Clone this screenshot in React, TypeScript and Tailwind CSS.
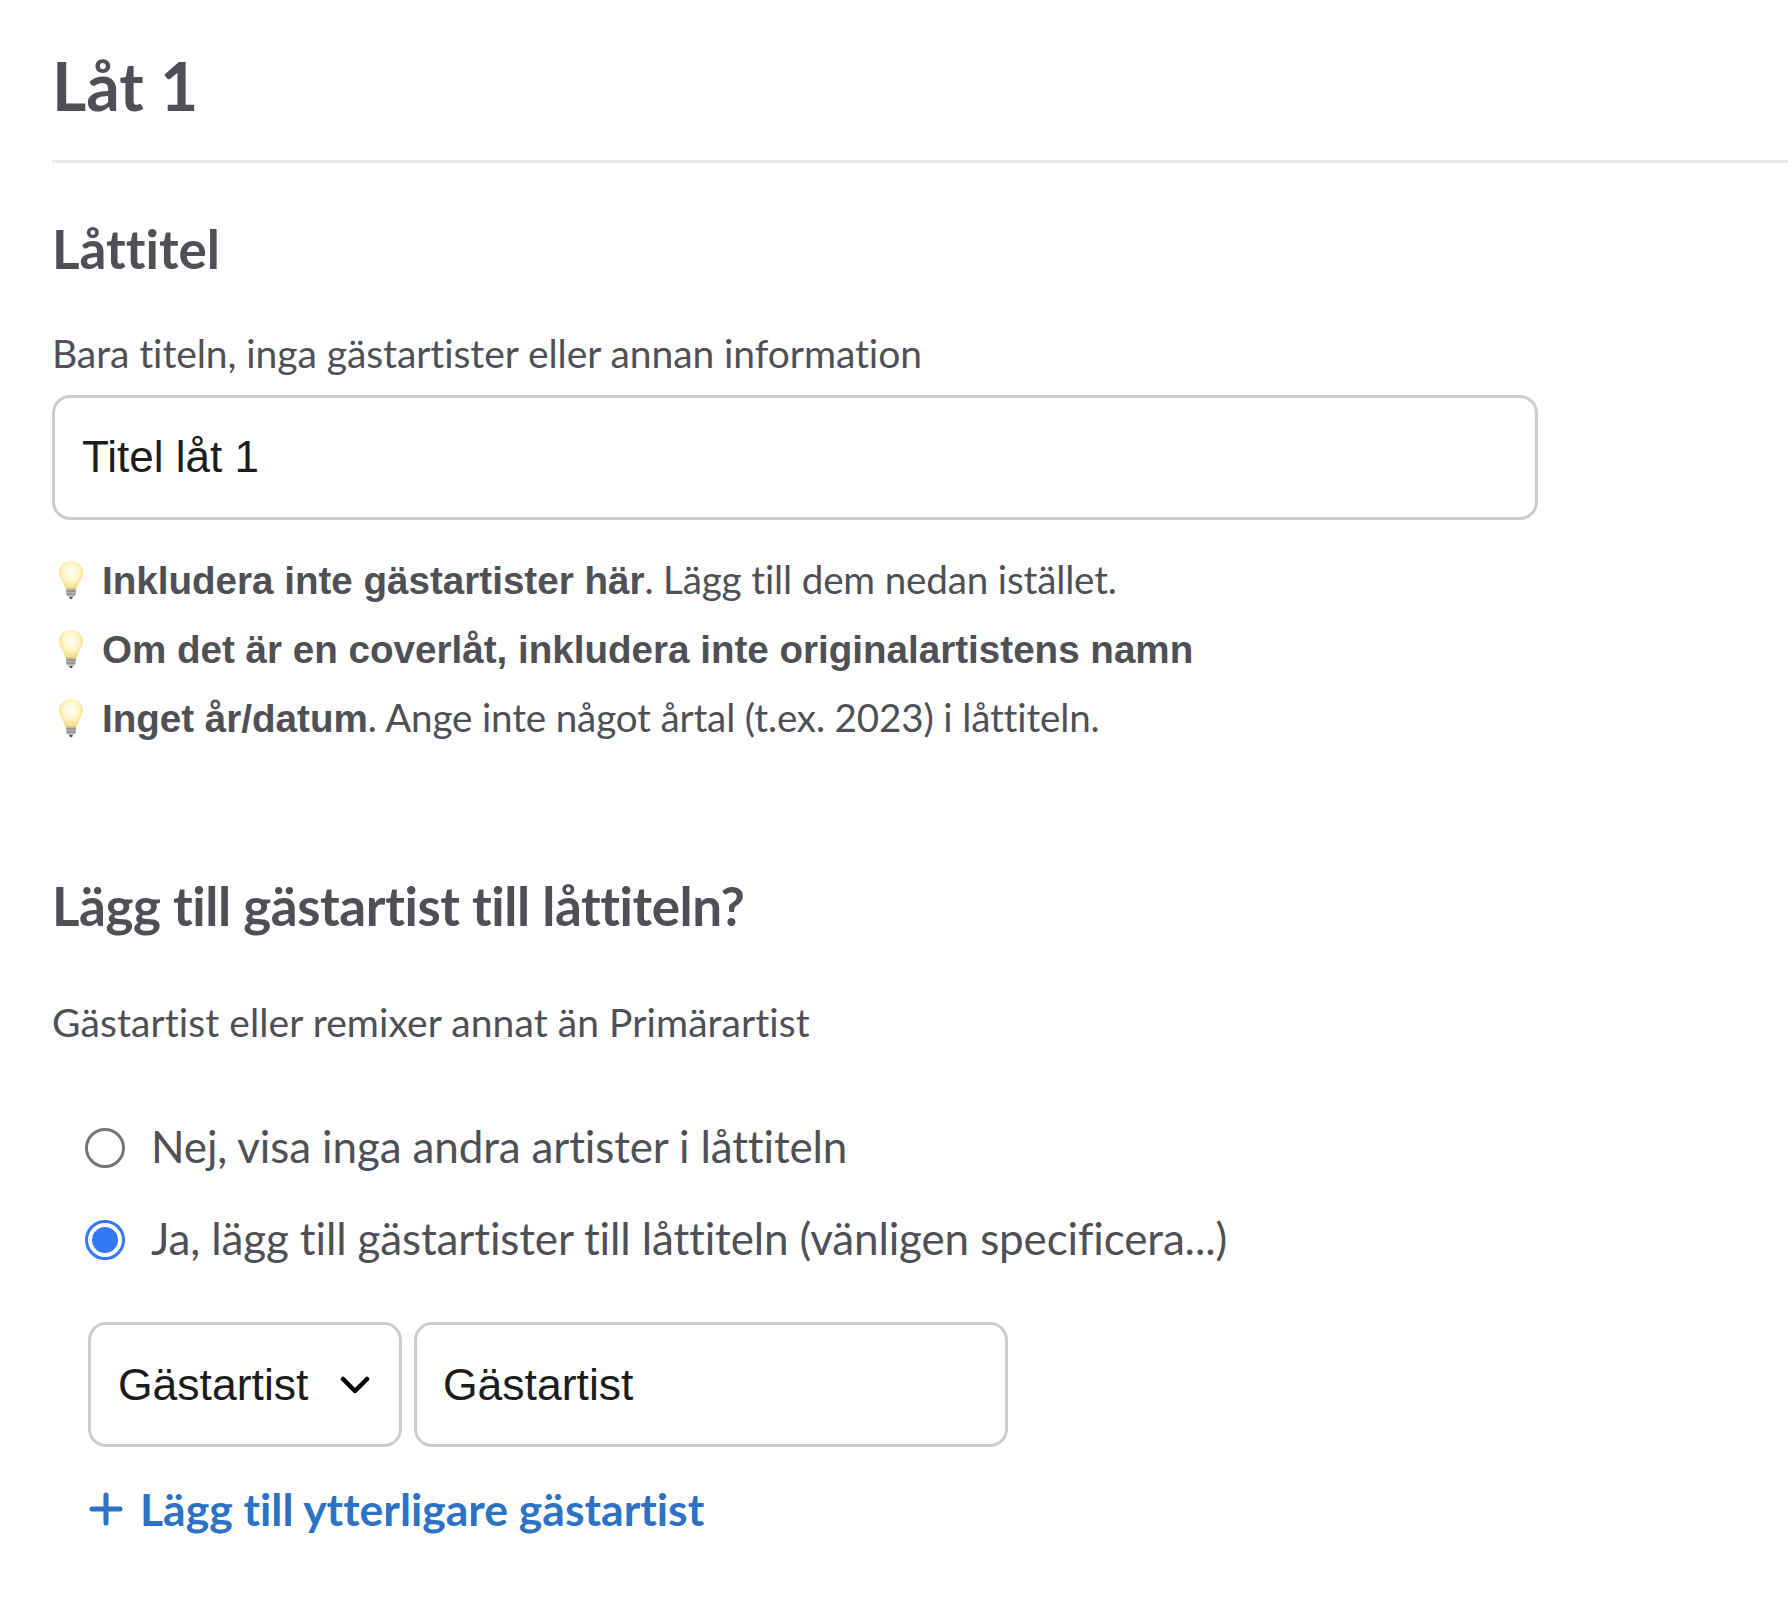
function Bulb() {
  return (
    <svg width="28" height="40" viewBox="0 0 28 40" className="shrink-0">
      <defs>
        <radialGradient id="glass" cx="50%" cy="40%" r="60%">
          <stop offset="0%" stopColor="#fffef6" />
          <stop offset="55%" stopColor="#fff6c9" />
          <stop offset="100%" stopColor="#fbd676" />
        </radialGradient>
      </defs>
      <path d="M14 1C6.5 1 2 6.4 2 12.2c0 6 4.4 9.6 6 15.3.3 1 .9 1.5 1.9 1.5h8.2c1 0 1.6-.5 1.9-1.5 1.6-5.7 6-9.3 6-15.3C26 6.400 21.500 1 14 1z" fill="url(#glass)" />
      <path d="M9 28.500h10v5.500c0 1.500-1.500 2.500-2.500 2.500L15.500 39h-3l-1-2.500C10.500 36.500 9 35.500 9 34z" fill="#b9b9b4" />
      <path d="M9.500 31h9M10 34h8" stroke="#77777a" strokeWidth="1" />
      <path d="M12.500 37h3l-.7 2h-1.600z" fill="#4d4e53" />
    </svg>
  );
}

function Tip({ bold, rest }: { bold: string; rest?: string }) {
  return (
    <div className="flex items-center h-[69px]">
      <div className="w-[50px] pl-[5px] flex">
        <Bulb />
      </div>
      <p className="text-[38.6px] leading-[48px] whitespace-nowrap">
        <b className="font-['Liberation_Sans',sans-serif] font-bold">{bold}</b>
        <span className="tracking-[-0.15px]">{rest}</span>
      </p>
    </div>
  );
}

function Radio({ checked, children }: { checked?: boolean; children: React.ReactNode }) {
  return (
    <label className="flex items-center gap-[26px] h-[48px]">
      {checked ? (
        <span className="mt-[4px] w-[40px] h-[40px] rounded-full border-[3px] border-[#3478f6] flex items-center justify-center shrink-0">
          <span className="w-[26px] h-[26px] rounded-full bg-[#3478f6]" />
        </span>
      ) : (
        <span className="mt-[4px] w-[40px] h-[40px] rounded-full border-[3px] border-[#767676] shrink-0" />
      )}
      <span className="text-[44px] leading-[48px] tracking-[-0.13px] whitespace-nowrap">{children}</span>
    </label>
  );
}

export default function App() {
  return (
    <div className="min-h-[1620px] bg-white pl-[52px] text-[#4f5056] font-['Lato',sans-serif] [font-variant-ligatures:none]">
      <h1 className="text-[66px] leading-[76px] font-bold pt-[48px] pb-[36px] border-b-[3px] border-[#e8e9ec]">
        Låt 1
      </h1>

      <h2 className="mt-[56px] text-[53px] leading-[60px] font-bold">Låttitel</h2>
      <p className="mt-[51px] text-[39px] leading-[46px] tracking-[-0.07px]">Bara titeln, inga gästartister eller annan information</p>
      <div className="mt-[19px] w-[1486px] h-[125px] rounded-[18px] border-[3px] border-[#cccccc] flex items-center pl-[27px] pb-[1px] text-[44px] text-[#1c1c1c] font-['Liberation_Sans',sans-serif]">
        Titel låt 1
      </div>

      <div className="mt-[25px]">
        <Tip bold="Inkludera inte gästartister här" rest=". Lägg till dem nedan istället." />
        <Tip bold="Om det är en coverlåt, inkludera inte originalartistens namn" />
        <Tip bold="Inget år/datum" rest=". Ange inte något årtal (t.ex. 2023) i låttiteln." />
      </div>

      <h2 className="mt-[124px] text-[53px] leading-[60px] tracking-[-0.44px] font-bold">Lägg till gästartist till låttiteln?</h2>
      <p className="mt-[63px] text-[39px] leading-[46px] tracking-[0.08px]">Gästartist eller remixer annat än Primärartist</p>

      <div className="mt-[77px] ml-[33px] flex flex-col gap-[44px]">
        <Radio>Nej, visa inga andra artister i låttiteln</Radio>
        <Radio checked>
          Ja, lägg till gästartister till låttiteln (vänligen speci
          <span className="[font-variant-ligatures:normal]">fi</span>cera...)
        </Radio>
      </div>

      <div className="mt-[60px] ml-[36px] flex gap-[12px] text-[44.5px] text-[#1c1c1c] font-['Liberation_Sans',sans-serif]">
        <div className="w-[314px] h-[125px] rounded-[18px] border-[3px] border-[#cccccc] flex items-center justify-between pl-[27px] pr-[29px]">
          <span className="pt-[2px]">Gästartist</span>
          <svg width="30" height="20" viewBox="0 0 30 20" fill="none" stroke="#000000" strokeWidth="4.500" strokeLinecap="round" strokeLinejoin="round">
            <path d="M3 4l12 12L27 4" />
          </svg>
        </div>
        <div className="w-[594px] h-[125px] rounded-[18px] border-[3px] border-[#cccccc] flex items-center pl-[26px] pt-[2px]">
          Gästartist
        </div>
      </div>

      <a className="mt-[36px] ml-[37px] flex items-center gap-[17px] text-[#2d72c4] text-[44.5px] leading-[52px] font-bold">
        <svg width="34" height="34" viewBox="0 0 34 34" fill="none" stroke="#2d72c4" strokeWidth="5" strokeLinecap="round">
          <path d="M17 3v28M3 17h28" />
        </svg>
        Lägg till ytterligare gästartist
      </a>
    </div>
  );
}
